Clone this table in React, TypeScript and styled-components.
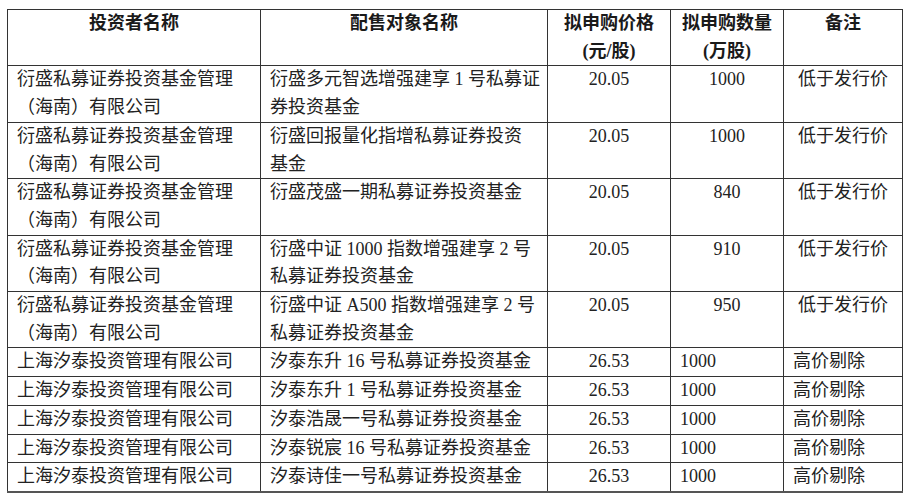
import React from "react";
import styled, { createGlobalStyle } from "styled-components";

const Global = createGlobalStyle`
  html, body { margin: 0; padding: 0; background: #ffffff; }
  body {
    font-family: "Liberation Serif", "Noto Sans CJK SC", serif;
    color: #222222;
  }
`;

const Page = styled.div`
  width: 910px;
  height: 500px;
  padding: 9px 0 0 7px;
  box-sizing: border-box;
  background: #ffffff;
`;

const Table = styled.table`
  border-collapse: collapse;
  table-layout: fixed;
  width: 895px;
  border: 1.5px solid #333;
  border-bottom: 2px solid #555;
`;

const Th = styled.th`
  border: 1px solid #333;
  padding: 0;
  font-family: "Liberation Serif", "Noto Sans CJK SC", serif;
  font-weight: 700;
  font-size: 18px;
  line-height: 27.7px;
  height: 55.4px;
  text-align: center;
  vertical-align: top;
  color: #1a1a1a;
`;

type Align = "left" | "center";

const Td = styled.td<{ $align: Align }>`
  border: 1px solid #333;
  padding: 0 ${(p) => (p.$align === "left" ? "8px" : "0")} 0
    ${(p) => (p.$align === "left" ? "9px" : "0")};
  font-family: "Liberation Serif", "Noto Sans CJK SC", serif;
  font-size: 18px;
  line-height: 27.7px;
  text-align: ${(p) => p.$align};
  vertical-align: top;
  white-space: nowrap;
  color: #222;
`;

const Line = styled.div`
  display: block;
`;

const Paren = styled.span`
  margin-left: 0px;
`;

type Row = {
  investor: string[];
  target: string[];
  price: string;
  qty: string;
  note: string;
  lowGroup: boolean;
};

const cols = [253, 287, 123, 113, 119];

const investorA = ["衍盛私募证券投资基金管理", "（海南）有限公司"];
const investorB = ["上海汐泰投资管理有限公司"];

const rows: Row[] = [
  { investor: investorA, target: ["衍盛多元智选增强建享 1 号私募证", "券投资基金"], price: "20.05", qty: "1000", note: "低于发行价", lowGroup: true },
  { investor: investorA, target: ["衍盛回报量化指增私募证券投资", "基金"], price: "20.05", qty: "1000", note: "低于发行价", lowGroup: true },
  { investor: investorA, target: ["衍盛茂盛一期私募证券投资基金"], price: "20.05", qty: "840", note: "低于发行价", lowGroup: true },
  { investor: investorA, target: ["衍盛中证 1000 指数增强建享 2 号", "私募证券投资基金"], price: "20.05", qty: "910", note: "低于发行价", lowGroup: true },
  { investor: investorA, target: ["衍盛中证 A500 指数增强建享 2 号", "私募证券投资基金"], price: "20.05", qty: "950", note: "低于发行价", lowGroup: true },
  { investor: investorB, target: ["汐泰东升 16 号私募证券投资基金"], price: "26.53", qty: "1000", note: "高价剔除", lowGroup: false },
  { investor: investorB, target: ["汐泰东升 1 号私募证券投资基金"], price: "26.53", qty: "1000", note: "高价剔除", lowGroup: false },
  { investor: investorB, target: ["汐泰浩晟一号私募证券投资基金"], price: "26.53", qty: "1000", note: "高价剔除", lowGroup: false },
  { investor: investorB, target: ["汐泰锐宸 16 号私募证券投资基金"], price: "26.53", qty: "1000", note: "高价剔除", lowGroup: false },
  { investor: investorB, target: ["汐泰诗佳一号私募证券投资基金"], price: "26.53", qty: "1000", note: "高价剔除", lowGroup: false },
];

const Lines = ({ lines }: { lines: string[] }) => (
  <>
    {lines.map((l, i) => (
      <Line key={i}>{l.startsWith("（") ? <Paren>{l}</Paren> : l}</Line>
    ))}
  </>
);

export default function App() {
  return (
    <>
      <Global />
      <Page>
        <Table>
          <colgroup>
            {cols.map((w, i) => (
              <col key={i} style={{ width: w }} />
            ))}
          </colgroup>
          <thead>
            <tr>
              <Th>投资者名称</Th>
              <Th>配售对象名称</Th>
              <Th>
                <Line>拟申购价格</Line>
                <Line>(元/股)</Line>
              </Th>
              <Th>
                <Line>拟申购数量</Line>
                <Line>(万股)</Line>
              </Th>
              <Th>备注</Th>
            </tr>
          </thead>
          <tbody>
            {rows.map((r, i) => (
              <tr key={i}>
                <Td $align="left">
                  <Lines lines={r.investor} />
                </Td>
                <Td $align="left">
                  <Lines lines={r.target} />
                </Td>
                <Td $align="center">{r.price}</Td>
                <Td $align={r.lowGroup ? "center" : "left"}>{r.qty}</Td>
                <Td $align={r.lowGroup ? "center" : "left"}>{r.note}</Td>
              </tr>
            ))}
          </tbody>
        </Table>
      </Page>
    </>
  );
}
